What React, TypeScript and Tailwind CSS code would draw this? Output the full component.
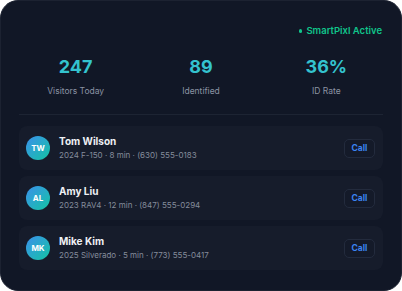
import React from 'react'

const stats = [
  { value: '247', label: 'Visitors Today' },
  { value: '89', label: 'Identified' },
  { value: '36%', label: 'ID Rate' },
]

const leads = [
  { initials: 'TW', name: 'Tom Wilson', info: '2024 F-150 · 8 min · (630) 555-0183' },
  { initials: 'AL', name: 'Amy Liu', info: '2023 RAV4 · 12 min · (847) 555-0294' },
  { initials: 'MK', name: 'Mike Kim', info: '2025 Silverado · 5 min · (773) 555-0417' },
]

export default function App() {
  return (
    <div className="h-[291px] w-[402px] bg-white" style={{ fontFamily: 'Inter, "Open Sans", sans-serif' }}>
      <div className="flex h-full w-full flex-col rounded-[18px] border border-[#1c2231] bg-[#111726] px-[18px] pt-[23px] pb-[19px]">
        <div className="flex justify-end pr-[1px]">
          <span className="flex items-center gap-[4px] text-[9.5px] font-semibold text-[#10c48a]">
            <span className="h-[3.5px] w-[3.5px] rounded-full bg-[#10c48a]" />
            SmartPixl Active
          </span>
        </div>

        <div className="mt-[18px] grid grid-cols-3 gap-4 px-[2px]">
          {stats.map((s) => (
            <div key={s.label} className="flex flex-col items-center">
              <span className="text-[18px] leading-[22px] font-bold text-[#34c3cf]">{s.value}</span>
              <span className="mt-[7px] text-[8.5px] text-[#8b93a3]">{s.label}</span>
            </div>
          ))}
        </div>

        <div className="mt-[16px] h-px bg-[#1d2433]" />

        <div className="mt-[11px] flex flex-col gap-[6px]">
          {leads.map((l) => (
            <div key={l.name} className="flex h-[44px] items-center rounded-[8px] bg-[#161c2b] pr-[8px] pl-[7px]">
              <div className="flex h-[24px] w-[24px] items-center justify-center rounded-full bg-gradient-to-br from-[#3a8eea] to-[#14c3a0] text-[8px] font-bold text-white">
                {l.initials}
              </div>
              <div className="ml-[9px] flex flex-1 flex-col">
                <span className="text-[10px] leading-[13px] font-bold text-[#eef0f4]">{l.name}</span>
                <span className="mt-[2px] text-[8px] leading-[11px] text-[#858c9b]">{l.info}</span>
              </div>
              <button className="flex h-[19px] w-[31px] items-center justify-center rounded-[5px] border border-[#232b3d] bg-[#141a29] text-[8.5px] font-bold text-[#3a82f0]">
                Call
              </button>
            </div>
          ))}
        </div>
      </div>
    </div>
  )
}
